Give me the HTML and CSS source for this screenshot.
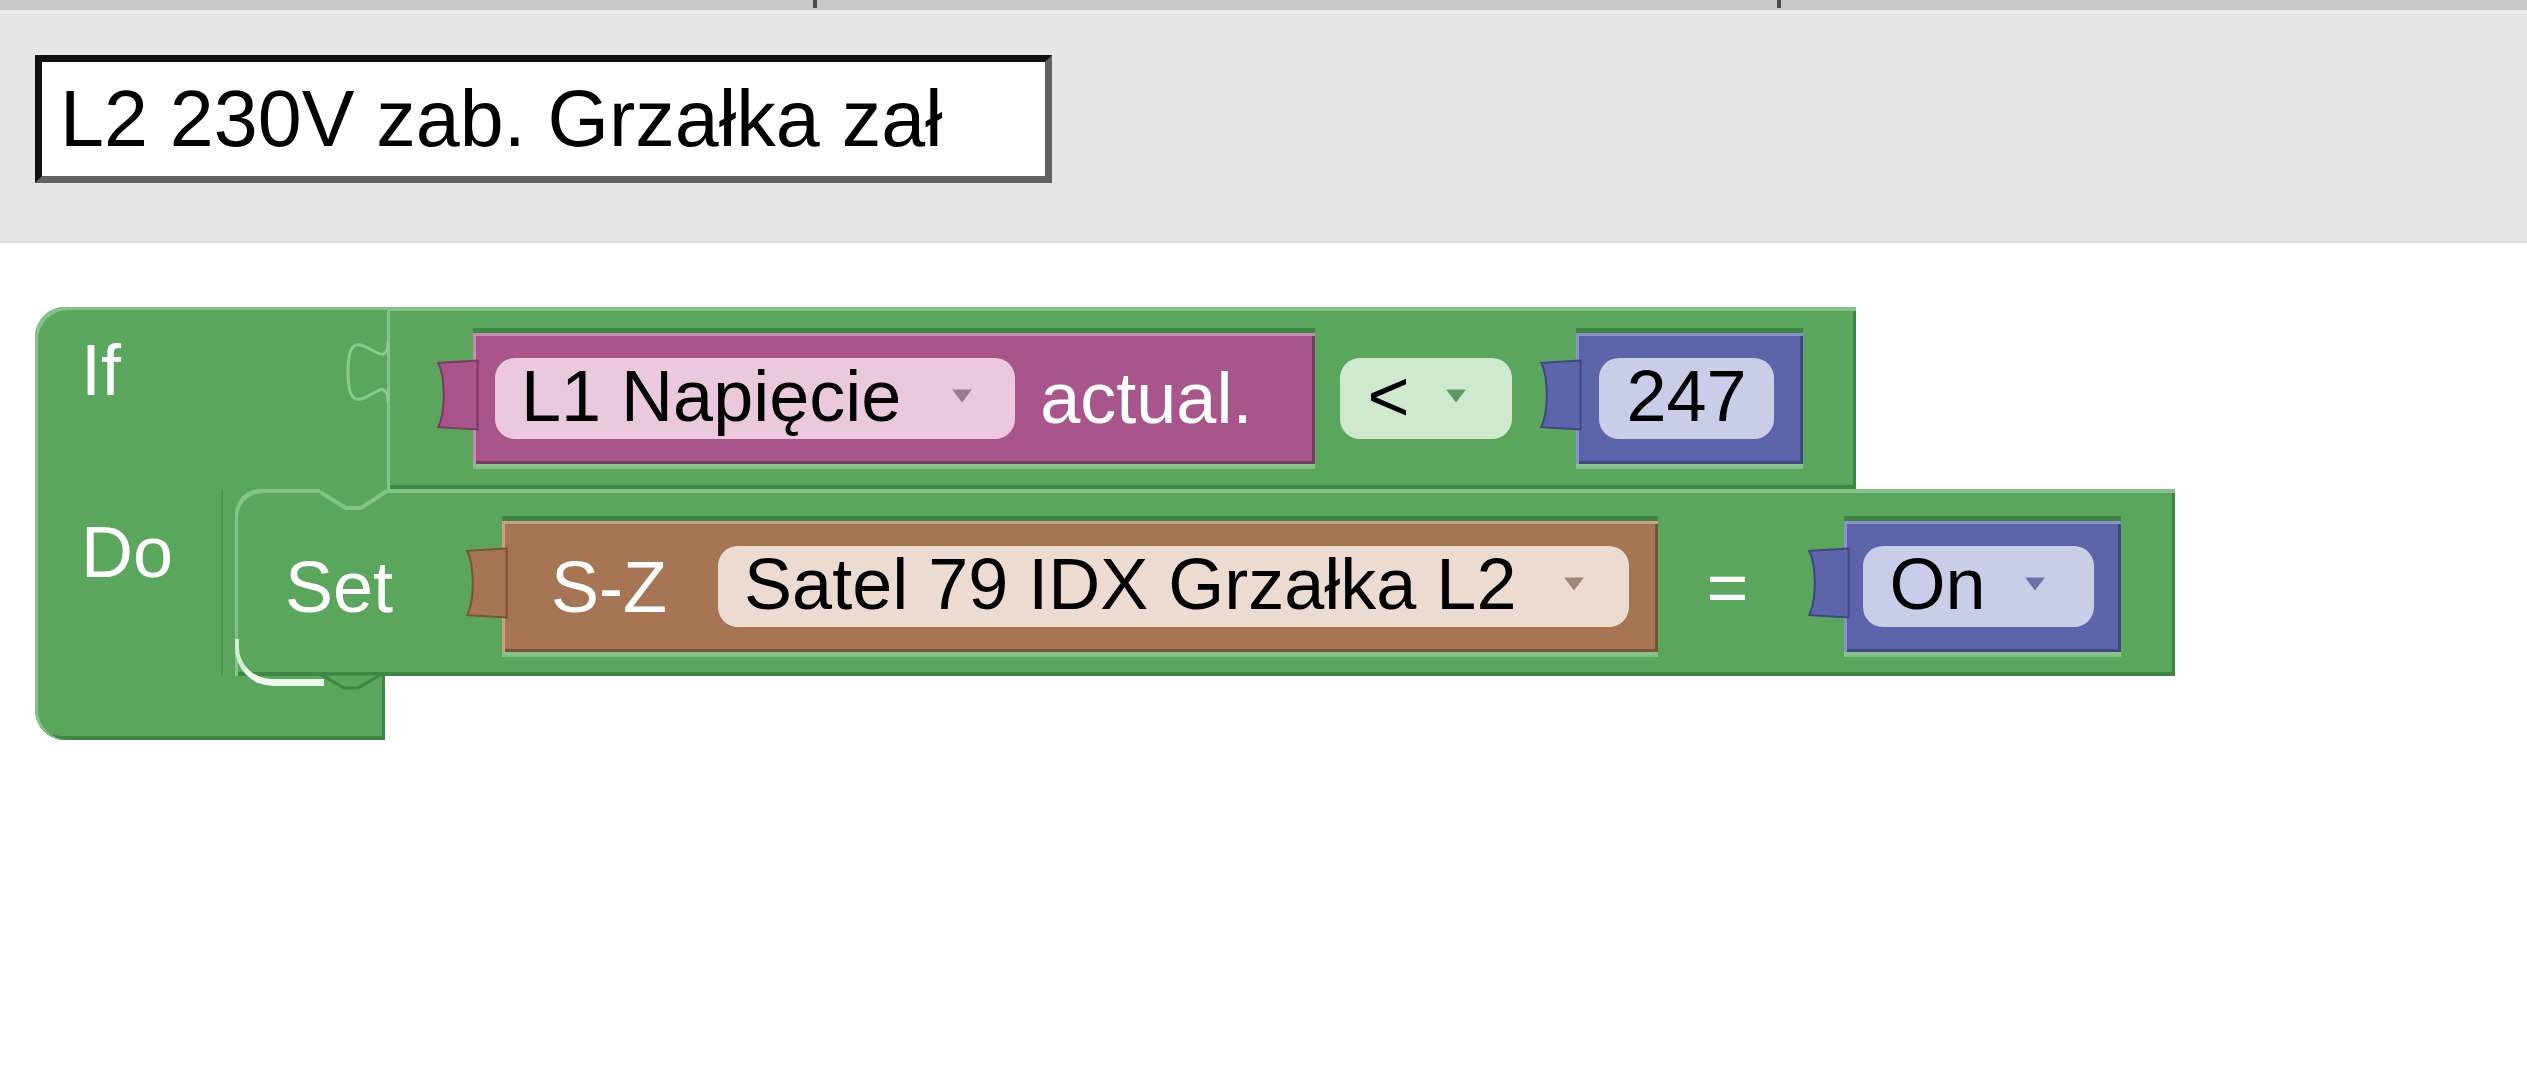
FILE: index.html
```html
<!DOCTYPE html>
<html lang="pl">

<head>
    <meta charset="UTF-8">
    <meta name="viewport" content="width=device-width, initial-scale=1.0">
    <title>Zdarzenie - L2 230V</title>
    <link rel="stylesheet" href="styles.css">
</head>

<body>
    <div class="toolbar">
        <div class="ruler">
            <span class="tick tick-a"></span>
            <span class="tick tick-b"></span>
        </div>
        <input class="event-name" type="text" value="L2 230V zab. Grzałka zał">
    </div>

    <div class="workspace">
        <div class="if-block">
            <div class="if-row">
                <div class="if-head"><span class="label">If</span></div>
                <div class="compare-block">
                    <svg class="tab tab-compare" viewBox="0 0 8 15" preserveAspectRatio="none">
                        <path d="M8,0 C8,10 0,-8 0,7.5 C0,23 8,5 8,15" />
                    </svg>
                    <div class="slot">
                        <div class="value device">
                            <svg class="tab" viewBox="0 0 8 15" preserveAspectRatio="none">
                                <path d="M8.5,0.3 L1,0.8 C2.4,4 2.4,11 1,14.2 L8.5,14.7 Z" />
                            </svg>
                            <span class="field field-pink">L1 Napięcie<svg class="arrow" viewBox="0 0 10 7"><path d="M0.5,0.5 H9.5 L5,6.5 Z" /></svg></span>
                            <span class="label actual">actual.</span>
                        </div>
                    </div>
                    <span class="field field-green op">&lt;<svg class="arrow" viewBox="0 0 10 7"><path d="M0.5,0.5 H9.5 L5,6.5 Z" /></svg></span>
                    <div class="slot slot-number">
                        <div class="value number">
                            <svg class="tab" viewBox="0 0 8 15" preserveAspectRatio="none">
                                <path d="M8.5,0.3 L1,0.8 C2.4,4 2.4,11 1,14.2 L8.5,14.7 Z" />
                            </svg>
                            <span class="field field-blue">247</span>
                        </div>
                    </div>
                </div>
            </div>

            <div class="do-row">
                <div class="do-head"><span class="label">Do</span></div>
                <div class="set-block">
                    <svg class="notch" viewBox="0 0 67 22">
                        <rect x="0" y="0" width="67" height="6" />
                        <path d="M0,3 L26,19 L41,19 L67,2" />
                    </svg>
                    <svg class="bottom-tab" viewBox="0 0 62 20">
                        <path d="M0,2 L24,16 L38,16 L62,2 Z" />
                    </svg>
                    <span class="label">Set</span>
                    <div class="slot slot-switch">
                        <div class="value switch">
                            <svg class="tab" viewBox="0 0 8 15" preserveAspectRatio="none">
                                <path d="M8.5,0.3 L1,0.8 C2.4,4 2.4,11 1,14.2 L8.5,14.7 Z" />
                            </svg>
                            <span class="label">S-Z</span>
                            <span class="field field-tan">Satel 79 IDX Grzałka L2<svg class="arrow" viewBox="0 0 10 7"><path d="M0.5,0.5 H9.5 L5,6.5 Z" /></svg></span>
                        </div>
                    </div>
                    <span class="label equals">=</span>
                    <div class="slot slot-state">
                        <div class="value state">
                            <svg class="tab" viewBox="0 0 8 15" preserveAspectRatio="none">
                                <path d="M8.5,0.3 L1,0.8 C2.4,4 2.4,11 1,14.2 L8.5,14.7 Z" />
                            </svg>
                            <span class="field field-blue field-state">On<svg class="arrow" viewBox="0 0 10 7"><path d="M0.5,0.5 H9.5 L5,6.5 Z" /></svg></span>
                        </div>
                    </div>
                </div>
            </div>

            <div class="if-foot"></div>
        </div>
    </div>
</body>

</html>
```

FILE: styles.css
```css
body {
    margin: 0;
    padding: 0;
    font-family: "Liberation Sans", Arial, sans-serif;
    background-color: #fff;
}

/* top bar with the event name */

.toolbar {
    height: 243px;
    background-color: #e6e6e6;
    border-bottom: 2px solid #dcdcdc;
    box-sizing: border-box;
}

.ruler {
    display: flex;
    height: 10px;
    background-color: #c9c9c9;
    border-bottom: 3px solid #eeeeee;
}

.tick {
    width: 4px;
    height: 8px;
    background-color: #4a4a4a;
}

.tick-a {
    margin-left: 813px;
}

.tick-b {
    margin-left: 960px;
}

.event-name {
    display: block;
    box-sizing: border-box;
    width: 1017px;
    height: 128px;
    margin: 42px 0 0 35px;
    padding: 0 0 0 18px;
    border: 7px solid;
    border-color: #111 #626262 #626262 #111;
    background-color: #fff;
    color: #000;
    font-family: "Liberation Sans", Arial, sans-serif;
    font-size: 79px;
    outline: none;
}

/* blockly workspace */

.workspace {
    padding: 64px 0 0 35px;
}

.if-block {
    display: flex;
    flex-direction: column;
    align-items: flex-start;
}

.if-row {
    display: flex;
}

.do-row {
    display: flex;
    background-color: #59a65c;
}

.label {
    font-size: 72px;
    line-height: 72px;
    color: #fff;
    white-space: pre;
}

.if-head {
    box-sizing: border-box;
    width: 352px;
    height: 182px;
    padding: 27px 0 0 46px;
    background-color: #59a65c;
    border-top-left-radius: 30px;
    box-shadow: inset 3px 3px 0 #86c388;
}

.compare-block {
    position: relative;
    display: flex;
    align-items: center;
    box-sizing: border-box;
    height: 182px;
    padding: 0 53px 0 86px;
    background-color: #59a65c;
    box-shadow: inset 3px 4px 0 #86c388, inset -3px -4px 0 #3e8742;
}

.do-head {
    box-sizing: border-box;
    width: 200px;
    height: 187px;
    padding: 27px 0 0 46px;
    background-color: #59a65c;
    box-shadow: inset 3px 0 0 #86c388, inset -12px 0 0 #59a65c, inset -14px 0 0 #4b964f;
}

.set-block {
    position: relative;
    display: flex;
    align-items: center;
    box-sizing: border-box;
    height: 187px;
    padding: 8px 54px 0 50px;
    background-color: #59a65c;
    border-top-left-radius: 25px;
    box-shadow: inset 3px 4px 0 #86c388, inset -3px -4px 0 #3e8742;
}

.set-block::after {
    content: "";
    position: absolute;
    left: 0;
    bottom: -10px;
    width: 85px;
    height: 40px;
    border-left: 4px solid #d5ebd5;
    border-bottom: 7px solid #eef8ee;
    border-bottom-left-radius: 38px;
}

.if-foot {
    box-sizing: border-box;
    width: 350px;
    height: 64px;
    background-color: #59a65c;
    border-bottom-left-radius: 30px;
    box-shadow: inset 3px 0 0 #86c388, inset -3px -4px 0 #3e8742;
}

.notch {
    position: absolute;
    left: 85px;
    top: 0;
    width: 67px;
    height: 22px;
}

.notch rect {
    fill: #59a65c;
}

.notch path {
    fill: none;
    stroke: #86c388;
    stroke-width: 4;
    stroke-linejoin: round;
}

.bottom-tab {
    position: absolute;
    left: 85px;
    bottom: -16px;
    width: 62px;
    height: 20px;
}

.bottom-tab path {
    fill: #59a65c;
    stroke: #3e8742;
    stroke-width: 3;
    stroke-linejoin: round;
}

/* value blocks plugged into inputs */

.slot {
    border-top: 5px solid #3e8742;
    border-bottom: 5px solid #86c388;
}

.value {
    position: relative;
    display: flex;
    align-items: center;
    box-sizing: border-box;
    height: 131px;
}

.tab {
    position: absolute;
    left: -40px;
    top: 26px;
    width: 42px;
    height: 72px;
    overflow: visible;
}

.tab path {
    stroke-width: 2;
    vector-effect: non-scaling-stroke;
}

.tab-compare {
    left: -39px;
    top: 34px;
    width: 40px;
    height: 62px;
}

.tab-compare path {
    fill: none;
    stroke: #8ccb8e;
    stroke-width: 3;
}

.device {
    padding: 0 63px 0 22px;
    background-color: #a7558a;
    box-shadow: inset 3px 3px 0 #c98bb2, inset -3px -3px 0 #7b3a63;
}

.device .tab path {
    fill: #a7558a;
    stroke: #7b3a63;
}

.number,
.state {
    background-color: #5c64aa;
    box-shadow: inset 3px 3px 0 #8c93cc, inset -3px -3px 0 #3f4680;
}

.number .tab path,
.state .tab path {
    fill: #5c64aa;
    stroke: #3f4680;
}

.number {
    padding: 0 29px 0 23px;
}

.state {
    padding: 0 27px 0 19px;
}

.switch {
    padding: 0 29px 0 49px;
    background-color: #a67554;
    box-shadow: inset 3px 3px 0 #c9a184, inset -3px -3px 0 #7a5238;
}

.switch .tab path {
    fill: #a67554;
    stroke: #7a5238;
}

.slot-number {
    margin-left: 64px;
}

.slot-switch {
    margin-left: 109px;
}

.slot-state {
    margin-left: 95px;
}

.actual {
    margin-left: 25px;
}

.equals {
    margin-left: 48px;
}

/* editable fields */

.field {
    display: inline-flex;
    align-items: center;
    box-sizing: border-box;
    height: 81px;
    padding: 2px 0 7px 0;
    border-radius: 20px;
    font-size: 72px;
    line-height: 72px;
    color: #000;
    white-space: pre;
}

.arrow {
    width: 22px;
    height: 16px;
}

.field-pink {
    padding-left: 26px;
    padding-right: 42px;
    background-color: #ebc9dc;
}

.field-pink .arrow {
    margin-left: 50px;
    fill: #9d7690;
}

.field-green {
    margin-left: 25px;
    padding-left: 27px;
    padding-right: 45px;
    background-color: #cfe9cf;
}

.field-green .arrow {
    margin-left: 36px;
    fill: #5f9a62;
}

.field-blue {
    padding-left: 27px;
    padding-right: 27px;
    background-color: #c9cde8;
}

.field-state {
    padding-right: 48px;
}

.field-state .arrow {
    margin-left: 38px;
    fill: #6b73a8;
}

.field-tan {
    margin-left: 51px;
    padding-left: 26px;
    padding-right: 44px;
    background-color: #ecdbd0;
}

.field-tan .arrow {
    margin-left: 47px;
    fill: #a08878;
}
```
